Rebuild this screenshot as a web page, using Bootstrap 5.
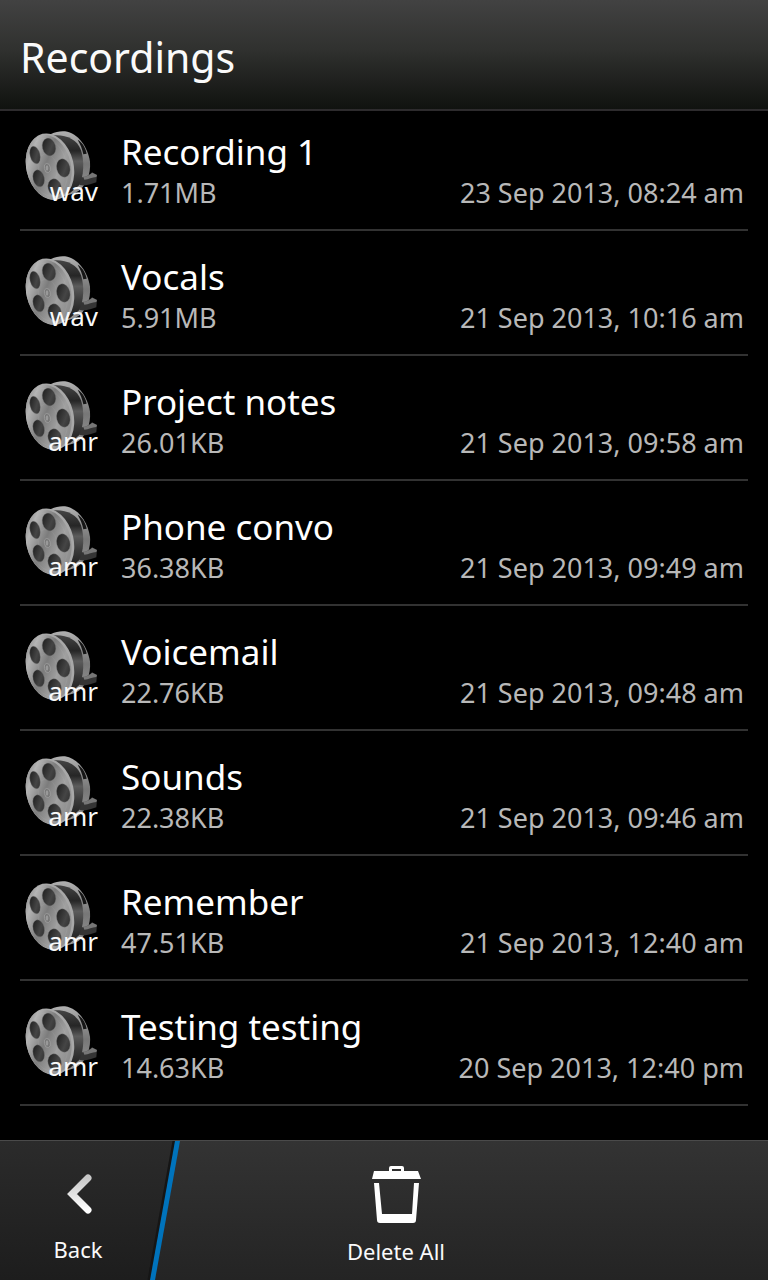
<!DOCTYPE html>
<html lang="en">
<head>
<meta charset="utf-8">
<meta name="viewport" content="width=device-width, initial-scale=1">
<title>Recordings</title>
<link href="https://cdn.jsdelivr.net/npm/bootstrap@5.3.0/dist/css/bootstrap.min.css" rel="stylesheet">
<style>
  body { background: #000; color: #fafafa; font-family: "Noto Sans", sans-serif; }
  .title-bar { height: 111px; border-bottom: 2px solid #2d2b2d; background: linear-gradient(#424242, #30312f 45%, #10120f); padding: 4px 20px 0; }
  .title-bar h1 { font-size: 41px; line-height: 56px; font-weight: 400; }
  .rec-list { padding: 0 20px; }
  .rec { height: 125px; border-bottom: 2px solid #323232; padding: 0 4px 20px 2px; }
  .rec:first-child { height: 120px; }
  .reel { width: 75px; height: 75px; margin-bottom: 5px; }
  .ext { right: -1px; bottom: -3px; font-size: 26px; line-height: 32px; }
  .rec-name { font-size: 35px; line-height: 50px; font-weight: 400; color: #fff; }
  .rec-meta { font-size: 27px; line-height: 32px; color: #b8b8b8; }
  .action-bar { height: 140px; border-top: 1px solid #4a4a4a; background: linear-gradient(#333, #242424); }
  .action { border: 0; background: none; color: #fafafa; font-size: 22px; line-height: 28px; }
  .action-back { width: 180px; padding: 32px 24px 0 0; }
  .action-delete { padding: 24px 0 0; }
  .action-spare { width: 156px; }
</style>
</head>
<body class="min-vh-100 d-flex flex-column">
<svg width="0" height="0" class="position-absolute" aria-hidden="true">
  <defs>
    <linearGradient id="face" x1="0" y1="0" x2="1" y2="1">
      <stop offset="0" stop-color="#6c6c6c"/><stop offset=".22" stop-color="#b4b4b4"/><stop offset=".45" stop-color="#7c7c7c"/><stop offset=".65" stop-color="#a0a0a0"/><stop offset="1" stop-color="#808080"/>
    </linearGradient>
    <linearGradient id="rim" x1="0" y1="0" x2="0" y2="1">
      <stop offset="0" stop-color="#b0b0b0"/><stop offset=".5" stop-color="#777"/><stop offset="1" stop-color="#999"/>
    </linearGradient>
    <linearGradient id="film" x1="0" y1="0" x2="0" y2="1">
      <stop offset="0" stop-color="#444"/><stop offset=".25" stop-color="#262626"/><stop offset=".42" stop-color="#5c5c5c"/><stop offset=".65" stop-color="#3a3a3a"/><stop offset="1" stop-color="#151515"/>
    </linearGradient>
    <linearGradient id="hole" x1="0" y1="0" x2="1" y2="1">
      <stop offset="0" stop-color="#191919"/><stop offset=".6" stop-color="#454545"/><stop offset="1" stop-color="#2c2c2c"/>
    </linearGradient>
    <linearGradient id="chev" x1="0" y1="0" x2="0" y2="1"><stop offset="0" stop-color="#c8c8c8"/><stop offset="1" stop-color="#fff"/></linearGradient>
    <linearGradient id="panel" x1="0" y1="0" x2="0" y2="1"><stop offset="0" stop-color="#2b2b2b"/><stop offset="1" stop-color="#1d1d1d"/></linearGradient>
    <symbol id="reel" viewBox="21 30 225 225">
      <path d="M108 45C122 38 136 36 150 37C190 43 218 84 225 128C228 165 213 206 180 222L140 234Z" fill="url(#rim)"/>
      <path d="M188 62C202 70 212 86 215 104L205 106C202 90 196 76 188 62Z" fill="#161616"/>
      <path d="M198 174C208 177 222 170 231 160L246 168L244 190C229 195 213 202 193 198Z" fill="#343434"/>
      <path d="M204 172C215 173 225 167 232 161L246 168L244 174C231 175 221 181 208 182Z" fill="#777"/>
      <path d="M110 50C148 45 186 59 198 94C209 127 206 173 193 198L165 222L129 234Z" fill="url(#film)"/>
      <ellipse cx="105" cy="143" rx="71" ry="101" transform="rotate(-13 105 143)" fill="#a8a8a8"/>
      <ellipse cx="101" cy="144" rx="67" ry="98" transform="rotate(-13 101 144)" fill="url(#face)"/>
      <g fill="none" stroke="#d0d0d0" stroke-opacity=".12" stroke-width="2">
        <ellipse cx="100" cy="145" rx="56" ry="88" transform="rotate(-12 100 145)"/>
        <ellipse cx="98" cy="146" rx="28" ry="42" transform="rotate(-12 98 146)"/>
      </g>
      <g fill="url(#hole)" stroke="#777" stroke-width="1">
        <ellipse cx="60" cy="108" rx="15" ry="27" transform="rotate(-14 60 108)"/>
        <ellipse cx="102" cy="84" rx="20" ry="27" transform="rotate(-14 102 84)"/>
        <ellipse cx="145" cy="147" rx="20" ry="28" transform="rotate(-14 145 147)"/>
        <ellipse cx="119" cy="205" rx="20" ry="26" transform="rotate(-14 119 205)"/>
        <ellipse cx="71" cy="178" rx="17" ry="26" transform="rotate(-14 71 178)"/>
      </g>
      <ellipse cx="97" cy="147" rx="9" ry="14" transform="rotate(-12 97 147)" fill="#777" stroke="#a6a6a6" stroke-width="2"/>
      <ellipse cx="96" cy="147" rx="4" ry="8" fill="#999"/>
    </symbol>
  </defs>
</svg>

<header class="title-bar d-flex align-items-center"><h1 class="m-0">Recordings</h1></header>

<main>
  <ul class="rec-list list-unstyled m-0" id="recordings"></ul>
</main>

<footer class="action-bar mt-auto d-flex align-items-stretch">
  <button type="button" class="action action-back position-relative d-flex flex-column align-items-center flex-shrink-0">
    <svg class="position-absolute top-0 start-0 w-100 h-100" viewBox="0 0 180 140" preserveAspectRatio="none" aria-hidden="true">
      <path d="M0 0H176L151 140H0Z" fill="url(#panel)"/>
      <path d="M174 0L149 140" stroke="#151515" stroke-width="3"/>
      <path d="M175 0H180L155 140H150Z" fill="#0073bc"/>
    </svg>
    <svg class="position-relative ms-1" width="26" height="42" viewBox="0 0 26 42" aria-hidden="true"><path d="M21 5L5 21L21 37" fill="none" stroke="url(#chev)" stroke-width="7" stroke-linecap="round" stroke-linejoin="miter"/></svg>
    <span class="position-relative mt-3 pt-1">Back</span>
  </button>
  <button type="button" class="action action-delete flex-grow-1 d-flex flex-column align-items-center">
    <svg width="50" height="60" viewBox="0 0 50 60" aria-hidden="true">
      <path fill="#fff" fill-rule="evenodd" d="M3 6H18V3Q18 1 20 1H31Q33 1 33 3V6H47L50 14H1ZM21 4V6H30V4Z"/>
      <path fill="#fff" d="M3 18H8L11 49H41L43 18H48L45 55Q45 58 42 58H9Q6 58 6 55Z"/>
    </svg>
    <span class="mt-2 pt-1">Delete All</span>
  </button>
  <div class="action-spare flex-shrink-0"></div>
</footer>

<script src="https://cdn.jsdelivr.net/npm/bootstrap@5.3.0/dist/js/bootstrap.bundle.min.js"></script>
<script>
  const recordings = [
    ["Recording 1", "wav", "1.71MB", "23 Sep 2013, 08:24 am"],
    ["Vocals", "wav", "5.91MB", "21 Sep 2013, 10:16 am"],
    ["Project notes", "amr", "26.01KB", "21 Sep 2013, 09:58 am"],
    ["Phone convo", "amr", "36.38KB", "21 Sep 2013, 09:49 am"],
    ["Voicemail", "amr", "22.76KB", "21 Sep 2013, 09:48 am"],
    ["Sounds", "amr", "22.38KB", "21 Sep 2013, 09:46 am"],
    ["Remember", "amr", "47.51KB", "21 Sep 2013, 12:40 am"],
    ["Testing testing", "amr", "14.63KB", "20 Sep 2013, 12:40 pm"]
  ];
  document.getElementById("recordings").innerHTML = recordings.map(([name, ext, size, date]) => `
    <li class="rec d-flex align-items-end gap-4">
      <div class="reel position-relative flex-shrink-0">
        <svg class="d-block w-100 h-100" aria-hidden="true"><use href="#reel"/></svg>
        <span class="ext position-absolute">${ext}</span>
      </div>
      <div class="flex-grow-1">
        <h2 class="rec-name m-0">${name}</h2>
        <div class="rec-meta d-flex justify-content-between"><span>${size}</span><span>${date}</span></div>
      </div>
    </li>`).join("");
</script>
</body>
</html>
